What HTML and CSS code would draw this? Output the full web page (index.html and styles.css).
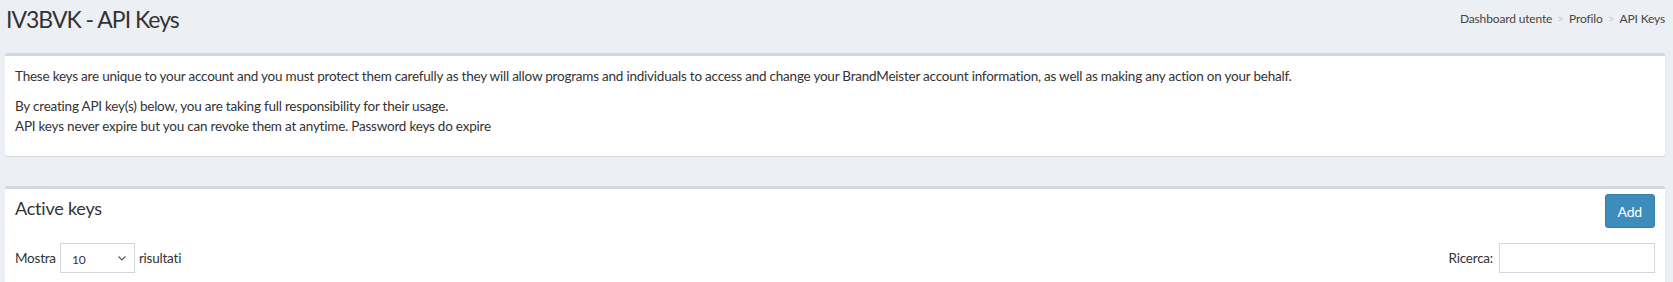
FILE: index.html
```html
<!DOCTYPE html>
<html lang="it">
<head>
  <meta charset="UTF-8" />
  <title>IV3BVK - API Keys</title>
  <link rel="stylesheet" href="styles.css">
</head>
<body>
  <section class="content-header">
    <h1>IV3BVK - API Keys</h1>
    <ol class="breadcrumb">
      <li><a href="#">Dashboard utente</a></li>
      <li><a href="#">Profilo</a></li>
      <li class="active">API Keys</li>
    </ol>
  </section>

  <section class="content">
    <div class="box">
      <div class="box-body">
        <p>These keys are unique to your account and you must protect them carefully as they will allow programs and individuals to access and change your BrandMeister account information, as well as making any action on your behalf.</p>
        <p>By creating API key(s) below, you are taking full responsibility for their usage.<br>
        API keys never expire but you can revoke them at anytime. Password keys do expire</p>
      </div>
    </div>

    <div class="box">
      <div class="box-header">
        <h3 class="box-title">Active keys</h3>
        <button class="btn">Add</button>
      </div>
      <div class="box-body">
        <div class="table-tools">
          <label class="length">Mostra
            <span class="select-wrap">
              <select>
                <option>10</option>
                <option>25</option>
                <option>50</option>
                <option>100</option>
              </select>
              <svg class="chevron" width="8" height="5" viewBox="0 0 8 5"><path d="M0.5 0.5 L4 4 L7.5 0.5" fill="none" stroke="#555" stroke-width="1.1"/></svg>
            </span>
            risultati</label>
          <label class="filter">Ricerca: <input type="search"></label>
        </div>
      </div>
    </div>
  </section>
</body>
</html>
```
FILE: styles.css
```css
body {
  margin: 0;
  background: #ecf0f5;
  color: #333;
  font-family: Lato, "Liberation Sans", sans-serif;
  font-size: 13.5px;
  letter-spacing: -0.22px;
}
/* intestazione pagina */
.content-header {
  display: flex;
  justify-content: space-between;
  align-items: center;
  height: 53px;
  box-sizing: border-box;
  padding: 0 8px 20px 6px;
}
.content-header h1 {
  margin: 0;
  font-size: 23px;
  font-weight: 400;
  letter-spacing: -1px;
  line-height: 24px;
  padding-top: 4px;
}
.breadcrumb {
  list-style: none;
  margin: 0;
  padding: 4px 0 0;
  display: flex;
  font-size: 12px;
  letter-spacing: -0.15px;
}
.breadcrumb li + li:before {
  content: ">";
  color: #ccc;
  padding: 0 5px;
}
.breadcrumb a {
  color: #444;
  text-decoration: none;
}
.breadcrumb .active {
  color: #444;
}
/* box */
.content {
  padding: 0 8px 0 5px;
}
.box {
  background: #fff;
  border-top: 3px solid #d2d6de;
  border-radius: 3px;
  box-shadow: 0 1px 1px rgba(0, 0, 0, 0.1);
  margin-bottom: 30px;
}
.box-body {
  padding: 10px;
}
.box-body p {
  margin: 0 0 10px;
  line-height: 20px;
}
.box-header {
  display: flex;
  justify-content: space-between;
  align-items: flex-start;
  padding: 5px 10px;
}
.box-title {
  margin: 5px 0 0;
  font-size: 18px;
  font-weight: 400;
  line-height: 18px;
}
.btn {
  height: 34px;
  padding: 0 12px;
  background: #3c8dbc;
  border: 1px solid #367fa9;
  border-radius: 3px;
  color: #fff;
  font-family: inherit;
  font-size: 14px;
  letter-spacing: -0.2px;
}
/* controlli tabella */
.table-tools {
  display: flex;
  justify-content: space-between;
  align-items: flex-start;
  min-height: 60px;
}
.table-tools label {
  display: flex;
  align-items: center;
  gap: 4px;
  font-weight: 400;
}
.select-wrap {
  position: relative;
  display: inline-block;
}
.length select {
  appearance: none;
  -webkit-appearance: none;
  width: 75px;
  height: 30px;
  border: 1px solid #d2d6de;
  border-radius: 0;
  background: #fff;
  font-family: inherit;
  font-size: 12px;
  padding: 2px 0 0 11px;
  color: #333;
  display: block;
}
.chevron {
  position: absolute;
  right: 9px;
  top: 13px;
  pointer-events: none;
}
.filter input {
  width: 156px;
  height: 30px;
  box-sizing: border-box;
  margin-left: 2px;
  border: 1px solid #d2d6de;
}
```
